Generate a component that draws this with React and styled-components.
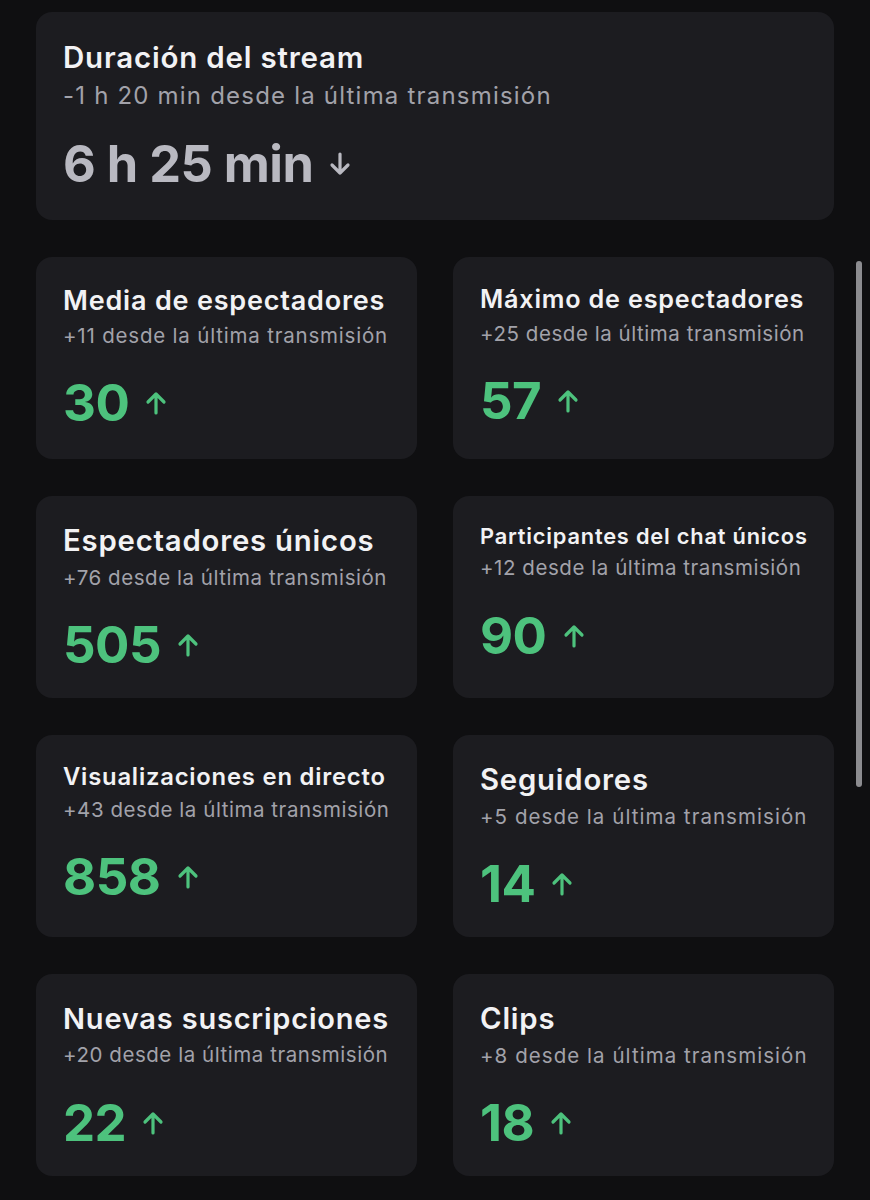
import styled, { createGlobalStyle } from "styled-components";

const GlobalStyle = createGlobalStyle`
  html, body {
    margin: 0;
    padding: 0;
    background: #0f0f11;
  }
  body {
    font-family: Inter, "Noto Sans", sans-serif;
    -webkit-font-smoothing: antialiased;
  }
`;

const Page = styled.main`
  position: relative;
  box-sizing: border-box;
  width: 870px;
  height: 1200px;
  overflow: hidden;
  padding: 12px 36px 0 36px;
  display: flex;
  flex-direction: column;
  gap: 37px;
`;

const Scrollbar = styled.div`
  position: absolute;
  top: 261px;
  right: 8px;
  width: 6px;
  height: 526px;
  border-radius: 3px;
  background: #8c8c90;
`;

const Card = styled.section`
  box-sizing: border-box;
  min-width: 0;
  height: ${({ $tall }) => ($tall ? "208px" : "202px")};
  padding: 27px 27px;
  background: #1c1c20;
  border-radius: 16px;
  display: flex;
  flex-direction: column;
`;

const Grid = styled.div`
  display: grid;
  grid-template-columns: repeat(2, minmax(0, 1fr));
  column-gap: 36px;
  row-gap: 37px;
`;

const Title = styled.h3`
  margin: 0;
  font-size: ${({ $size }) => $size}px;
  line-height: 1.25;
  font-weight: 600;
  letter-spacing: 0.8px;
  color: #f2f2f4;
  white-space: nowrap;
`;

const Subtitle = styled.p`
  margin: ${({ $gap }) => $gap}px 0 0 0;
  font-size: ${({ $size }) => $size}px;
  line-height: 1.3;
  font-weight: 400;
  letter-spacing: ${({ $track }) => $track}px;
  color: #a2a2aa;
  white-space: nowrap;
`;

const ValueRow = styled.div`
  margin-top: ${({ $gap }) => $gap}px;
  display: flex;
  align-items: center;
  gap: 16px;
  color: ${({ $down }) => ($down ? "#b9b9c1" : "#4dc27d")};
`;

const Value = styled.span`
  font-size: ${({ $size }) => $size}px;
  line-height: 60px;
  font-weight: 700;
  letter-spacing: -0.5px;
`;

function Arrow({ down }) {
  return (
    <svg width="22" height="24" viewBox="0 0 22 24" fill="none">
      {down ? (
        <path
          d="M11 2v19M3 13l8 8 8-8"
          stroke="currentColor"
          strokeWidth="3.2"
          strokeLinecap="round"
          strokeLinejoin="round"
        />
      ) : (
        <path
          d="M11 22V3M3 11l8-8 8 8"
          stroke="currentColor"
          strokeWidth="3.2"
          strokeLinecap="round"
          strokeLinejoin="round"
        />
      )}
    </svg>
  );
}

const stats = [
  { title: "Media de espectadores", tSize: 27, sub: "+11 desde la última transmisión", track: 0.8, value: "30" },
  { title: "Máximo de espectadores", tSize: 25.2, sub: "+25 desde la última transmisión", track: 0.55, value: "57" },
  { title: "Espectadores únicos", tSize: 29.3, sub: "+76 desde la última transmisión", track: 0.55, value: "505" },
  { title: "Participantes del chat únicos", tSize: 21.8, sub: "+12 desde la última transmisión", track: 0.55, value: "90" },
  { title: "Visualizaciones en directo", tSize: 23.8, sub: "+43 desde la última transmisión", track: 0.55, value: "858" },
  { title: "Seguidores", tSize: 29.3, sub: "+5 desde la última transmisión", track: 1.05, value: "14" },
  { title: "Nuevas suscripciones", tSize: 29, sub: "+20 desde la última transmisión", track: 0.55, value: "22" },
  { title: "Clips", tSize: 29.3, sub: "+8 desde la última transmisión", track: 1.05, value: "18" },
];

function StatCard({ title, tSize, sub, track, value }) {
  return (
    <Card>
      <Title $size={tSize}>{title}</Title>
      <Subtitle $size={20.5} $track={track} $gap={5}>
        {sub}
      </Subtitle>
      <ValueRow $gap={24}>
        <Value $size={51}>{value}</Value>
        <Arrow />
      </ValueRow>
    </Card>
  );
}

export default function App() {
  return (
    <>
      <GlobalStyle />
      <Page>
        <Card $tall>
          <Title $size={29.5}>Duración del stream</Title>
          <Subtitle $size={24} $track={1.2} $gap={4}>
            -1 h 20 min desde la última transmisión
          </Subtitle>
          <ValueRow $gap={23} $down>
            <Value $size={50.5}>6 h 25 min</Value>
            <Arrow down />
          </ValueRow>
        </Card>
        <Grid>
          {stats.map((s) => (
            <StatCard key={s.title} {...s} />
          ))}
        </Grid>
        <Scrollbar />
      </Page>
    </>
  );
}
